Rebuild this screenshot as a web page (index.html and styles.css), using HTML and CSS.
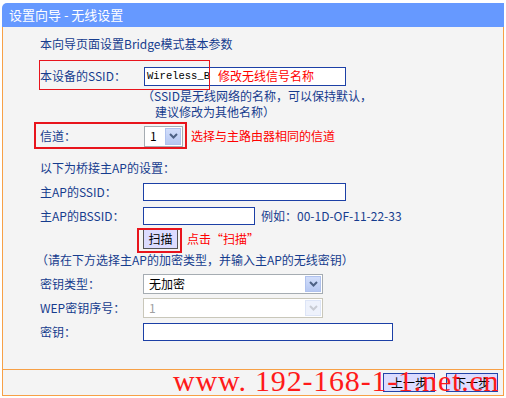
FILE: index.html
```html
<!DOCTYPE html>
<html>
<head>
	<title>设置向导 - 无线设置</title>
	<link rel="stylesheet" href="styles.css">
</head>
<body>
	<div class="page">
		<div class="title">设置向导 - 无线设置</div>
		<div class="panel">
			<div class="content">
				<div class="row intro">本向导页面设置Bridge模式基本参数</div>

				<div class="row ssid-row">
					<span class="lbl">本设备的SSID：</span>
					<div class="input ssid-input">
						<span class="ssid-value">Wireless_B</span>
						<span class="tip">修改无线信号名称</span>
					</div>
					<div class="mark mark-ssid"></div>
				</div>
				<div class="hint hint1">（SSID是无线网络的名称，可以保持默认，</div>
				<div class="hint hint2">建议修改为其他名称）</div>

				<div class="row channel-row">
					<span class="lbl">信道：</span>
					<div class="select channel">
						<span class="val">1</span>
						<span class="arrow"><svg width="9" height="6" viewBox="0 0 9 6"><path d="M1 1 L4.5 4.5 L8 1" fill="none" stroke="#4d6185" stroke-width="2"/></svg></span>
					</div>
					<span class="tip">选择与主路由器相同的信道</span>
					<div class="mark mark-channel"></div>
				</div>

				<div class="row heading">以下为桥接主AP的设置：</div>

				<div class="row">
					<span class="lbl">主AP的SSID：</span>
					<div class="input wide"></div>
				</div>
				<div class="row">
					<span class="lbl">主AP的BSSID：</span>
					<div class="input mid"></div>
					<span class="example">例如：00-1D-OF-11-22-33</span>
				</div>
				<div class="row scan-row">
					<span class="lbl"></span>
					<span class="btn scan">扫描</span>
					<span class="tip">点击“扫描”</span>
					<div class="mark mark-scan"></div>
				</div>
				<div class="note">（请在下方选择主AP的加密类型，并输入主AP的无线密钥）</div>

				<div class="row keytype-row">
					<span class="lbl">密钥类型：</span>
					<div class="select long">
						<span class="val">无加密</span>
						<span class="arrow"><svg width="9" height="6" viewBox="0 0 9 6"><path d="M1 1 L4.5 4.5 L8 1" fill="none" stroke="#4d6185" stroke-width="2"/></svg></span>
					</div>
				</div>
				<div class="row">
					<span class="lbl">WEP密钥序号：</span>
					<div class="select long disabled">
						<span class="val">1</span>
						<span class="arrow"><svg width="9" height="6" viewBox="0 0 9 6"><path d="M1 1 L4.5 4.5 L8 1" fill="none" stroke="#c9ccd4" stroke-width="2"/></svg></span>
					</div>
				</div>
				<div class="row">
					<span class="lbl">密钥：</span>
					<div class="input key"></div>
				</div>
			</div>
			<div class="footer">
				<span class="btn step">上一步</span>
				<span class="btn step">下一步</span>
			</div>
		</div>
		<div class="watermark">www. 192-168-1-1.net.cn</div>
	</div>
</body>
</html>
```

FILE: styles.css
```css
body {
	background-color: #fff;
	color: #163c8e;
	font-family: "Noto Sans CJK SC", sans-serif;
	font-size: 12px;
	margin: 0;
	padding: 0;
}

.page {
	margin: 0 2px;
	padding-top: 3px;
	position: relative;
}

.title {
	background-color: #6699ff;
	border-top-left-radius: 5px;
	color: #fff;
	font-size: 13px;
	height: 24px;
	line-height: 24px;
	padding-left: 7px;
}

.panel {
	background-color: #f4f4f4;
	border-bottom: 1px solid #f7a046;
	border-left: 1px solid #f7a046;
	border-right: 1px solid #f7a046;
}

.content {
	border-bottom: 1px solid #f7a046;
	box-sizing: border-box;
	height: 343px;
	padding: 5px 0 0 37px;
}

.row {
	align-items: center;
	display: flex;
	height: 24px;
	line-height: 16px;
	position: relative;
}

.lbl {
	flex: none;
	width: 103px;
}

.ssid-row {
	margin-top: 8px;
}

.channel-row {
	margin-top: 4px;
}

.heading {
	margin-top: 8px;
}

.scan-row {
	height: 22px;
}

.keytype-row {
	margin-top: 2px;
}

.hint {
	height: 16px;
	line-height: 16px;
}

.hint1 {
	padding-left: 102px;
}

.hint2 {
	padding-left: 115px;
}

.note {
	height: 20px;
	line-height: 20px;
	margin-left: -4px;
}

.tip {
	color: #ff0000;
}

.input {
	background-color: #fff;
	border: 1px solid #1c40a6;
	box-sizing: border-box;
	flex: none;
	height: 18px;
}

.ssid-input {
	align-items: center;
	display: flex;
	height: 19px;
	margin-left: 1px;
	overflow: hidden;
	width: 202px;
}

.ssid-value {
	color: #000;
	font-family: "Liberation Mono", monospace;
	font-size: 10.5px;
	padding-left: 2px;
	width: 70px;
}

.ssid-input .tip {
	padding-left: 1px;
}

.wide {
	width: 203px;
}

.mid {
	width: 112px;
}

.key {
	width: 250px;
}

.example {
	margin-left: 6px;
}

.select {
	align-items: center;
	background-color: #fff;
	border: 1px solid #a5acb2;
	box-sizing: border-box;
	color: #000;
	display: flex;
	flex: none;
	height: 20px;
	justify-content: space-between;
	padding: 1px;
}

.select .val {
	padding-left: 4px;
}

.arrow {
	align-items: center;
	background: linear-gradient(#d2defb, #b6c8f2);
	border: 1px solid #b0c2ee;
	box-sizing: border-box;
	display: flex;
	height: 100%;
	justify-content: center;
	width: 16px;
}

.channel {
	height: 21px;
	margin-left: 1px;
	margin-right: 8px;
	width: 39px;
}

.long {
	width: 180px;
}

.disabled {
	border-color: #c9c7ba;
	color: #a0a0a0;
}

.disabled .arrow {
	background: #eef2fc;
	border-color: #dde5f7;
}

.btn {
	background-color: #dcdcff;
	box-sizing: border-box;
	color: #000;
	flex: none;
	text-align: center;
}

.scan {
	border: 1px solid #555;
	height: 20px;
	line-height: 18px;
	margin-right: 9px;
	width: 35px;
}

.mark {
	border: 2px solid #e8141c;
	box-sizing: border-box;
	position: absolute;
}

.mark-ssid {
	border-width: 1px;
	height: 30px;
	left: -1px;
	top: -4px;
	width: 171px;
}

.mark-channel {
	height: 27px;
	left: -6px;
	top: -2px;
	width: 153px;
}

.mark-scan {
	height: 25px;
	left: 97px;
	top: 0;
	width: 45px;
}

.footer {
	align-items: center;
	display: flex;
	gap: 11px;
	height: 25px;
	justify-content: flex-end;
	padding-right: 5px;
}

.step {
	border: 1px solid #2244aa;
	height: 19px;
	line-height: 17px;
	width: 52px;
}

.watermark {
	color: #ff1a1a;
	font-family: "Liberation Serif", serif;
	font-size: 30px;
	left: 171px;
	letter-spacing: 0.8px;
	line-height: 30px;
	position: absolute;
	top: 366px;
	white-space: pre;
}
```
